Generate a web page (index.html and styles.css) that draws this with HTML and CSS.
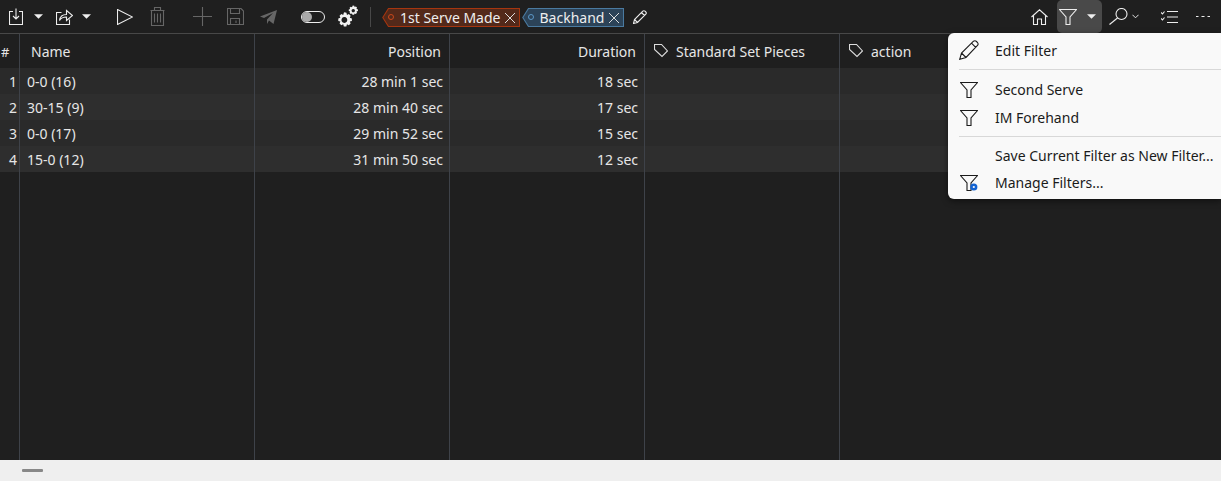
FILE: index.html
```html
<!DOCTYPE html>
<html lang="en">
<head>
<meta charset="utf-8">
<title>Clips</title>
<link rel="stylesheet" href="styles.css">
</head>
<body>
<div class="app">
  <header class="toolbar">
    <div class="tools">
      <svg class="ic i-down" viewBox="0 0 14 17"><path d="M4 3.500H.5V16.500H13.500V3.500H10M7 .5V11M4 8L7 11L10 8"/></svg>
      <svg class="caret c1" viewBox="0 0 10 5"><path d="M0 0H10L5 5Z"/></svg>
      <svg class="ic i-share" viewBox="0 0 17 16"><path d="M5.500 3.500H.5V15.500H13.500V10.500M3.500 11.500C4 7.500 7 5.500 10.500 5.500V1.500L16.500 6.500L10.500 11.500V8C7.500 8 5 9 3.500 11.500Z"/></svg>
      <svg class="caret c2" viewBox="0 0 10 5"><path d="M0 0H10L5 5Z"/></svg>
      <svg class="ic i-play" viewBox="0 0 16 16"><path d="M.5 .5V15.500L15.500 8Z"/></svg>
      <svg class="ic i-trash dim" viewBox="0 0 15 19"><path d="M.5 3.500H14.500M4.500 3.500V.5H10.500V3.500M1.500 3.500V18.500H13.500V3.500M4.500 6.500V15.500M7.500 6.500V15.500M10.500 6.500V15.500"/></svg>
      <svg class="ic i-plus dim" viewBox="0 0 19 19"><path d="M9.500 0V19M0 9.500H19"/></svg>
      <svg class="ic i-save dim" viewBox="0 0 17 17"><path d="M.5 .5H14L16.500 3V16.500H.5ZM3.500 .5V5.500H12.500V.5M3.500 16.500V10.500H12.500V16.500M9 12.500V15"/></svg>
      <svg class="ic i-send dim fill" viewBox="0 0 17 14"><path d="M0 6.500L17 0L13.500 14L9 10.500L7 14V9.500L13 3L4 8Z"/></svg>
      <span class="switch"><span class="knob"></span></span>
      <svg class="i-gears" viewBox="2 .5 21 22">
        <path fill-rule="evenodd" d="M9.500 7.500l2 .5.500 2 1.800-.8 1.700 1.700-.8 1.800 2 .6v2.400l-2 .6.800 1.800-1.700 1.700-1.800-.8-.6 2H9l-.6-2-1.800.8-1.700-1.700.8-1.800-2-.6v-2.400l2-.6-.8-1.800 1.700-1.700 1.800.8.600-2zM9.500 12a2.800 2.800 0 1 0 .01 0z"/>
        <path fill-rule="evenodd" d="M17.500 1l1.500.2.300 1.300 1.200-.5 1.100 1-.5 1.200 1.400.5v1.600l-1.400.5.500 1.200-1.100 1.100-1.200-.5-.5 1.300h-1.600l-.4-1.300-1.200.5-1.100-1.100.5-1.200-1.300-.5V4.800l1.300-.5-.5-1.200 1.100-1 1.200.5zM18 4.300a1.600 1.600 0 1 0 .01 0z"/>
      </svg>
      <span class="sep"></span>
      <span class="tag tag-red"><svg class="tip" viewBox="0 0 8 19"><path d="M8 .5H6.500L.8 9.500L6.500 18.500H8"/></svg><span class="dot"></span>1st Serve Made<svg class="x" viewBox="0 0 10 10"><path d="M0 0L10 10M10 0L0 10"/></svg></span>
      <span class="tag tag-blue"><svg class="tip" viewBox="0 0 8 19"><path d="M8 .5H6.500L.8 9.500L6.500 18.500H8"/></svg><span class="dot"></span>Backhand<svg class="x" viewBox="0 0 10 10"><path d="M0 0L10 10M10 0L0 10"/></svg></span>
      <svg class="ic i-pen" viewBox="0 0 14 14"><path d="M.5 13.500L1.500 9.500L9.800 1.200C10.500 .5 11.300 .5 12 1.200L12.800 2C13.500 2.700 13.500 3.500 12.800 4.200L4.500 12.500ZM1.500 9.500L4.500 12.500M8.500 2.500L11.500 5.500"/></svg>
    </div>
    <div class="tools-right">
      <svg class="ic i-home" viewBox="0 0 17 16"><path d="M.5 8L8.500 .8L16.500 8M2.500 6.500V15.500H6.500V10H10.500V15.500H14.500V6.500"/></svg>
      <span class="filter-btn">
        <svg class="ic i-filter" viewBox="0 0 18 16"><path d="M.5 .5H17.500L11 8V15.500H7V8Z"/></svg>
        <svg class="caret c3" viewBox="0 0 10 5"><path d="M0 0H10L5 5Z"/></svg>
      </span>
      <svg class="ic i-search" viewBox="0 0 19 17"><circle cx="12.500" cy="6" r="5.500"/><path d="M.5 16.500L8.500 10"/></svg>
      <svg class="ic i-chev" viewBox="0 0 8 5"><path d="M.5 .5L4 4L7.500 .5"/></svg>
      <svg class="ic i-list" viewBox="0 0 17 12"><path d="M6 .5H17M6 6H17M6 11.500H17M0 1.500L1.500 3L3.500 .5M0 7.500L1.500 9L3.500 6.500"/></svg>
      <svg class="ic i-more" viewBox="0 0 14 1"><path d="M0 .5H2.500M5.500 .5H8.500M11.500 .5H14"/></svg>
    </div>
  </header>

  <main class="grid">
    <div class="cell head num">#</div>
    <div class="cell head name">Name</div>
    <div class="cell head right">Position</div>
    <div class="cell head right">Duration</div>
    <div class="cell head tagged"><svg class="ic i-tag" viewBox="0 0 14 14"><path d="M.5 .5H7.500L13.500 7L8 12.500L.5 5.500Z"/></svg>Standard Set Pieces</div>
    <div class="cell head tagged last"><svg class="ic i-tag" viewBox="0 0 14 14"><path d="M.5 .5H7.500L13.500 7L8 12.500L.5 5.500Z"/></svg>action</div>

    <div class="cell a num-v">1</div><div class="cell a text">0-0 (16)</div><div class="cell a right-v">28 min 1 sec</div><div class="cell a right-v">18 sec</div><div class="cell a"></div><div class="cell a last"></div>
    <div class="cell b num-v">2</div><div class="cell b text">30-15 (9)</div><div class="cell b right-v">28 min 40 sec</div><div class="cell b right-v">17 sec</div><div class="cell b"></div><div class="cell b last"></div>
    <div class="cell a num-v">3</div><div class="cell a text">0-0 (17)</div><div class="cell a right-v">29 min 52 sec</div><div class="cell a right-v">15 sec</div><div class="cell a"></div><div class="cell a last"></div>
    <div class="cell b num-v">4</div><div class="cell b text">15-0 (12)</div><div class="cell b right-v">31 min 50 sec</div><div class="cell b right-v">12 sec</div><div class="cell b"></div><div class="cell b last"></div>

    <div class="cell"></div><div class="cell"></div><div class="cell"></div><div class="cell"></div><div class="cell"></div><div class="cell last"></div>
  </main>

  <footer class="statusbar"><span class="grip"></span></footer>

  <nav class="menu">
    <div class="item first"><svg class="mi" viewBox="0 0 20 20"><path d="M.7 19.300L2.500 13L14.500 1.200C15.500 .5 16.500 .5 17.500 1.500L18.500 2.500C19.300 3.500 19.300 4.500 18.500 5.500L7 17.500ZM2.500 13L7 17.500M12.500 3.200L16.700 7.400"/></svg>Edit Filter</div>
    <div class="rule r1"></div>
    <div class="item"><svg class="mi" viewBox="0 0 18 16"><path d="M.5 .5H17.500L11 8V15.500H7V8Z"/></svg>Second Serve</div>
    <div class="item"><svg class="mi" viewBox="0 0 18 16"><path d="M.5 .5H17.500L11 8V15.500H7V8Z"/></svg>IM Forehand</div>
    <div class="rule r2"></div>
    <div class="item plain">Save Current Filter as New Filter...</div>
    <div class="item last-item"><svg class="mi" viewBox="0 0 18 16"><path d="M.5 .5H17.500L11 8V15.500H7V8Z"/><circle class="cog" cx="13.800" cy="12" r="3.600"/><circle class="hub" cx="13.800" cy="12" r="1.100"/></svg>Manage Filters...</div>
  </nav>
</div>
</body>
</html>
```

FILE: styles.css
```css
* { box-sizing: border-box; }
html, body { height: 100%; margin: 0; }
body { font: 14px/20px "Noto Sans", "Open Sans", sans-serif; color: #e6e6e6; background: #1f1f1f; overflow: hidden; }
.app { position: relative; display: flex; flex-direction: column; height: 481px; }

svg { display: block; flex: none; }
.ic { fill: none; stroke: #ededed; stroke-width: 1.100; }
.ic.dim { stroke: #666; }
.ic.fill { fill: #666; stroke: none; }
.caret { fill: #eee; }

.toolbar { display: flex; justify-content: space-between; height: 34px; flex: none; border-bottom: 1px solid #484848; background: #1f1f1f; }
.tools { display: flex; align-items: center; padding-left: 9px; }
.tools-right { display: flex; align-items: center; padding-right: 11px; }

.i-down { width: 14px; height: 17px; }
.c1 { width: 9px; height: 5px; margin-left: 11px; }
.i-share { width: 17px; height: 16px; margin-left: 13px; }
.c2 { width: 9px; height: 5px; margin-left: 9px; }
.i-play { width: 16px; height: 16px; margin-left: 26px; }
.i-trash { width: 15px; height: 19px; margin-left: 17px; }
.i-plus { width: 19px; height: 19px; margin-left: 28px; }
.i-save { width: 17px; height: 17px; margin-left: 15px; }
.i-send { width: 17px; height: 14px; margin-left: 16px; }
.switch { display: flex; align-items: center; width: 24px; height: 12px; margin-left: 24px; border: 1px solid #eee; border-radius: 6px; background: #1f1f1f; }
.knob { display: block; width: 10px; height: 10px; border-radius: 50%; background: #aaa; }
.i-gears { width: 23px; height: 23px; margin-left: 11px; fill: #f2f2f2; }
.sep { width: 1px; height: 20px; margin-left: 11px; background: #484848; }

.tag { display: flex; align-items: center; height: 19px; margin: 2px 0 0 18px; padding: 0 4px 0 11px; border: 1px solid; border-left: 0; position: relative; color: #eee; line-height: 17px; white-space: nowrap; }
.tag-red { background: #53291a; border-color: #a5350f; }
.tag-blue { background: #2c4358; border-color: #4a7aa0; margin-left: 9px; padding-left: 10px; }
.tip { position: absolute; left: -7px; top: -1px; width: 8px; height: 19px; stroke-width: 1.100; }
.tag-red .tip { fill: #53291a; stroke: #a5350f; }
.tag-blue .tip { fill: #2c4358; stroke: #4a7aa0; }
.dot { position: absolute; left: -1px; top: 5px; width: 6px; height: 6px; border-radius: 50%; border: 1px solid; }
.tag-red .dot { border-color: #c8481c; }
.tag-blue .dot { border-color: #5b97c6; }
.x { width: 10px; height: 10px; margin-left: 5px; fill: none; stroke: #ddd; stroke-width: 1; }
.i-pen { width: 14px; height: 14px; margin: 1px 0 0 9px; }

.i-home { width: 17px; height: 16px; }
.filter-btn { display: flex; align-items: center; width: 45px; height: 33px; margin-left: 9px; padding-left: 2px; border-radius: 5px; background: #494949; }
.i-filter { width: 18px; height: 16px; }
.c3 { width: 9px; height: 5px; margin-left: 10px; }
.i-search { width: 19px; height: 17px; margin-left: 7px; }
.i-chev { width: 7px; height: 5px; margin-left: 4px; }
.i-list { width: 17px; height: 12px; margin-left: 22px; }
.i-more { width: 14px; height: 1px; margin-left: 18px; }

.grid { flex: 1; display: grid; grid-template-columns: 20px 235px 195px 195px 195px 1fr; grid-template-rows: 34px 26px 26px 26px 26px 1fr; min-height: 0; }
.cell { border-right: 1px solid #3e4249; white-space: nowrap; line-height: 28px; }
.cell.last { border-right: 0; }
.head { display: flex; align-items: center; line-height: 20px; padding-top: 2px; }
.head.num { padding-left: 1px; font-size: 13px; }
.head.name { padding-left: 11px; }
.head.right, .right-v { justify-content: flex-end; text-align: right; padding-right: 8px; }
.head.tagged { padding-left: 9px; }
.i-tag { width: 14px; height: 14px; margin: -3px 8px 0 0; stroke: #ddd; }
.a { background: #2a2a2a; }
.b { background: #2e2e2e; }
.num-v { text-align: right; padding-right: 2px; }
.text { padding-left: 7px; }
.right-v { padding-right: 6px; }

.statusbar { flex: none; height: 21px; background: #efefef; padding: 9px 0 0 22px; }
.grip { display: block; width: 21px; height: 3px; border-radius: 1px; background: #888; }

.menu { position: absolute; top: 33px; right: 0; width: 273px; height: 166px; background: #f9f9f9; border-radius: 6px 0 0 6px; color: #1b1b1b; box-shadow: 0 2px 6px rgba(0,0,0,.5); }
.item { display: flex; align-items: center; height: 28px; padding-left: 12px; white-space: nowrap; }
.item.first { height: 36px; padding-left: 11px; }
.item.plain { height: 27px; padding-left: 47px; }
.item.last-item { height: 27px; }
.mi { width: 18px; height: 16px; margin-right: 17px; fill: none; stroke: #1b1b1b; stroke-width: 1.100; }
.first .mi { width: 20px; height: 20px; margin: 0 16px 2px 0; }
.rule { height: 1px; background: #d8d8d8; margin-left: 11px; }
.r1 { margin-bottom: 6px; }
.r2 { margin-top: 4px; margin-bottom: 5px; }
.cog { fill: #1464d2; stroke: none; }
.hub { fill: #f9f9f9; stroke: none; }
```
